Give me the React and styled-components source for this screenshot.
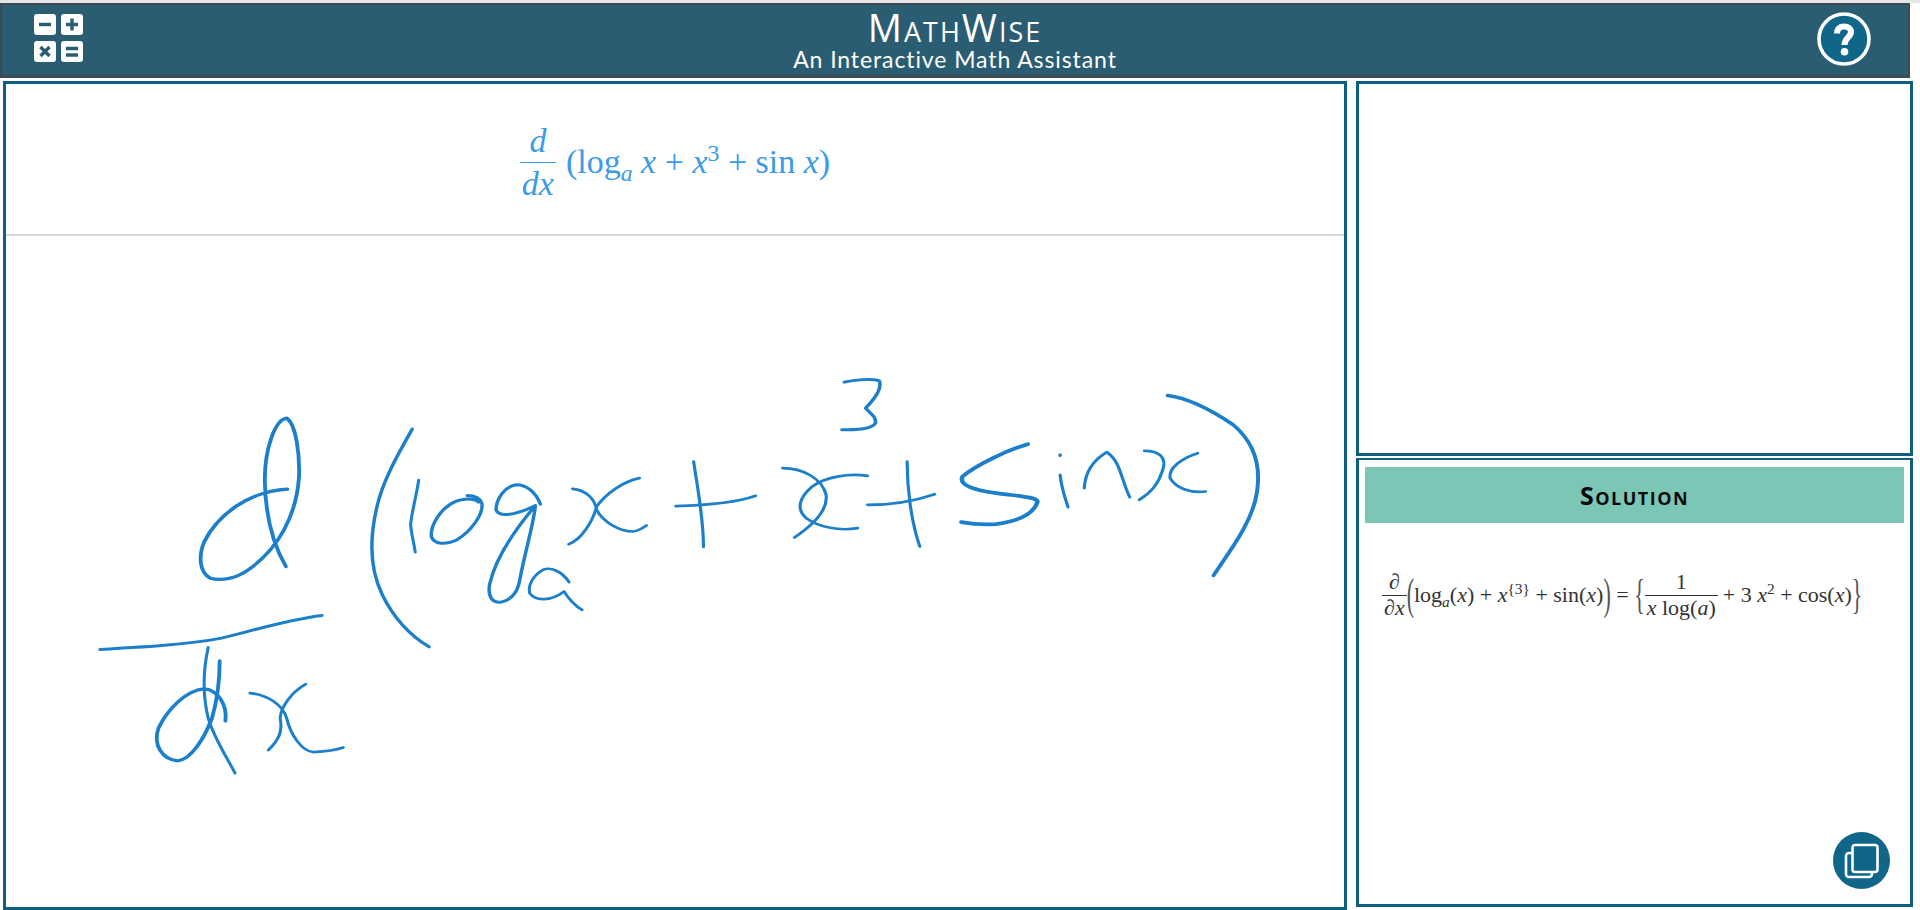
import styled, { createGlobalStyle } from "styled-components";

const Global = createGlobalStyle`
  html, body {
    margin: 0;
    padding: 0;
    background: #fff;
  }
  * {
    box-sizing: border-box;
  }
`;

const Page = styled.div`
  width: 1920px;
  height: 910px;
  overflow: hidden;
  background: #fff;
  border-top: 3px solid #e4e6e7;
  font-family: "Open Sans", sans-serif;
`;

const Header = styled.header`
  width: 1910px;
  height: 75px;
  background: #2b5d72;
  border: 2px solid #3d4a52;
  border-bottom-width: 3px;
  display: grid;
  grid-template-columns: 300px 1fr 300px;
  align-items: center;
  color: #fff;
`;

const LogoWrap = styled.div`
  padding-left: 32px;
  display: flex;
`;

const TitleBox = styled.div`
  align-self: start;
  padding-top: 2px;
  display: flex;
  flex-direction: column;
  align-items: center;
`;

const Title = styled.div`
  font-size: 38px;
  line-height: 40px;
  letter-spacing: 2px;
  font-variant: small-caps;
`;

const Subtitle = styled.div`
  font-family: "Comic Sans MS", "Segoe Print", "Lato", cursive;
  font-size: 23px;
  line-height: 24px;
  letter-spacing: 0.9px;
`;

const HelpWrap = styled.div`
  display: flex;
  justify-content: flex-end;
  padding-right: 36px;
`;

const Main = styled.main`
  display: grid;
  grid-template-columns: 1344px 557px;
  column-gap: 9px;
  height: 829px;
  margin: 3px 0 0 3px;
`;

const Panel = styled.section`
  border: 3px solid #0f6080;
  background: #fff;
  display: flex;
  flex-direction: column;
`;

const MathBar = styled.div`
  height: 152px;
  flex: none;
  border-bottom: 2px solid #d9d9d9;
  display: flex;
  align-items: center;
  justify-content: center;
  padding-top: 6px;
  color: #3b9be9;
  font-family: "Liberation Serif", serif;
  font-size: 34px;
`;

const Formula = styled.div`
  display: flex;
  align-items: center;
  white-space: pre;
  font-family: "Liberation Serif", serif;
`;

const Fraction = styled.span`
  display: inline-flex;
  flex-direction: column;
  align-items: center;
  line-height: ${(p) => p.$lh || 1.12};
  margin-right: ${(p) => p.$gap || 0}px;
`;

const Num = styled.span`
  padding: 0 2px;
  border-bottom: 1.5px solid currentColor;
  align-self: stretch;
  text-align: center;
`;

const Den = styled.span`
  padding: 0 2px;
`;

const V = styled.i``;

const Sub = styled.sub`
  font-size: 0.7em;
  line-height: 0;
`;

const Sup = styled.sup`
  font-size: 0.7em;
  line-height: 0;
`;

const Canvas = styled.svg`
  display: block;
  flex: 1;
  width: 100%;
  min-height: 0;
`;

const Stroke = styled.path`
  fill: none;
  stroke: #1b7fcc;
  stroke-width: ${(p) => p.$w || 8}px;
  stroke-linecap: round;
  stroke-linejoin: round;
`;

const RightColumn = styled.div`
  display: grid;
  grid-template-rows: 375px 449px;
  row-gap: 2px;
`;

const SolutionPanel = styled(Panel)`
  border-top-width: 2px;
  padding: 7px 6px 15px 6px;
`;

const SolutionBar = styled.div`
  height: 56px;
  flex: none;
  background: #7cc6b6;
  display: flex;
  align-items: center;
  justify-content: center;
  color: #0a0a0a;
  font-size: 25px;
  letter-spacing: 1.5px;
  font-weight: 700;
  font-variant: small-caps;
`;

const SolutionMath = styled(Formula)`
  margin: 47px 0 0 17px;
  color: #333;
  font-size: 22px;
`;

const Paren = styled.span`
  display: inline-block;
  font-weight: 400;
  transform: scaleY(${(p) => p.$y || 2});
  font-size: 1em;
  color: #555;
`;

const CopyButton = styled.button`
  margin-top: auto;
  align-self: flex-end;
  margin-right: 14px;
  width: 57px;
  height: 57px;
  padding: 0;
  border: none;
  border-radius: 50%;
  background: #0f6688;
  display: flex;
  align-items: center;
  justify-content: center;
`;

const IconButton = styled.button`
  padding: 0;
  border: none;
  background: none;
  display: block;
`;

const CalcIcon = () => (
  <svg width="50" height="49" viewBox="0 0 50 49">
    <rect x="0" y="0" width="22" height="21" rx="3" fill="#fff" />
    <rect x="27" y="0" width="22" height="21" rx="3" fill="#fff" />
    <rect x="0" y="27" width="22" height="21" rx="3" fill="#fff" />
    <rect x="27" y="27" width="22" height="21" rx="3" fill="#fff" />
    <g stroke="#2b5d72" strokeWidth="3.4" fill="none">
      <path d="M5 10.5h12" />
      <path d="M32 10.5h12M38 4.5v12" />
      <path d="M6.5 33l9 9M15.5 33l-9 9" />
      <path d="M32 34.5h12M32 41h12" />
    </g>
  </svg>
);

const HelpIcon = () => (
  <svg width="56" height="56" viewBox="0 0 56 56">
    <circle cx="28" cy="28" r="25" fill="#0f6688" stroke="#fff" strokeWidth="3.6" />
    <path
      d="M21 22.5 C21 17.5 24 15.5 28 15.5 C32.5 15.5 35 18 35 21 C35 26 28.5 27 28.5 34"
      fill="none"
      stroke="#fff"
      strokeWidth="6"
    />
    <circle cx="28.5" cy="40.8" r="3.8" fill="#fff" />
  </svg>
);

const CopyIcon = () => (
  <svg width="36" height="36" viewBox="0 0 36 36">
    <rect x="2" y="10" width="26" height="24" rx="3" fill="none" stroke="#fff" strokeWidth="2.6" />
    <rect x="8.5" y="2" width="25" height="27" rx="2.5" fill="#0f6688" stroke="#fff" strokeWidth="2.6" />
  </svg>
);

// handwriting, traced from the picture
const leftStrokes = [
  { d: "M538 555 C510 500 485 420 483 300 C482 200 510 115 540 110 C565 130 575 220 572 290 C565 400 520 500 440 565 C410 590 370 600 340 590 C310 570 310 520 325 480 C360 400 440 330 542 323", w: 10 },
  { d: "M868 143 C830 220 790 300 775 380 C755 480 760 570 790 640 C820 710 860 760 912 796", w: 9 },
  { d: "M885 296 C878 350 865 400 864 430 C866 460 872 480 876 512", w: 8 },
  { d: "M1012 342 C1030 342 1045 350 1050 365 C1055 400 1020 450 985 475 C955 490 925 490 918 465 C915 430 945 375 985 358 C1010 350 1030 352 1042 362", w: 9 },
  { d: "M1203 368 C1190 330 1165 310 1140 310 C1110 315 1088 350 1087 385 C1095 410 1140 400 1190 372 C1140 440 1085 530 1070 610 C1065 650 1080 665 1100 662 C1130 655 1145 630 1150 590 C1165 500 1185 430 1190 372", w: 9 },
  { d: "M1278 602 C1260 570 1230 555 1210 565 C1185 580 1170 610 1175 635 C1190 660 1230 660 1265 630 C1275 650 1295 675 1312 685", w: 8 },
  { d: "M1287 322 C1320 325 1345 350 1350 385 C1365 420 1410 450 1445 450 C1460 448 1470 440 1480 432", w: 8 },
  { d: "M1462 290 C1420 300 1375 335 1350 375 C1340 420 1310 475 1277 488", w: 8 },
  { d: "M52 804 C150 798 280 790 370 770 C450 748 540 715 632 702", w: 9 },
  { d: "M380 1018 C385 970 360 925 325 922 C280 925 230 980 205 1040 C190 1090 215 1135 255 1138 C290 1135 325 1070 345 1010 C360 950 365 880 365 838", w: 10 },
  { d: "M335 798 C325 850 318 930 335 1010 C350 1070 385 1130 405 1175", w: 8 },
  { d: "M444 935 C490 940 530 970 540 1010 C550 1060 580 1110 610 1112 C640 1110 670 1105 688 1098", w: 8 },
  { d: "M590 908 C555 930 525 975 523 1010 C530 1050 520 1075 492 1106", w: 8 },
];

const rightStrokes = [
  { d: "M466 62 C490 55 535 50 555 58 C562 85 540 115 520 140 C530 155 548 165 545 185 C535 205 490 205 460 205", w: 9 },
  { d: "M85 300 C95 380 110 470 110 556", w: 8 },
  { d: "M40 434 C100 432 190 425 242 403", w: 8 },
  { d: "M310 320 C360 320 410 350 420 400 C425 440 400 480 340 528", w: 8 },
  { d: "M525 343 C480 335 420 345 385 375 C350 410 345 445 370 470 C400 495 450 510 500 500", w: 8 },
  { d: "M625 300 C625 380 635 480 657 555", w: 8 },
  { d: "M525 430 C580 430 640 420 695 398", w: 8 },
  { d: "M930 248 C880 265 800 310 765 345 C755 370 790 385 850 395 C910 405 950 405 955 420 C945 460 900 480 850 488 C820 490 790 488 762 482", w: 11 },
  { d: "M1012 280 l0 2", w: 9 },
  { d: "M1012 340 C1015 380 1025 410 1032 437", w: 8 },
  { d: "M1073 380 C1075 340 1090 300 1130 272 C1165 300 1165 350 1188 407", w: 8 },
  { d: "M1225 268 C1260 268 1285 285 1270 330 C1260 370 1240 395 1212 415", w: 8 },
  { d: "M1360 275 C1320 290 1285 320 1290 350 C1305 380 1340 395 1380 390", w: 8 },
  { d: "M1284 102 C1340 110 1400 150 1450 190 C1500 240 1520 310 1510 390 C1500 480 1440 570 1400 642", w: 10 },
];

const App = () => {
  return (
    <Page>
      <Global />
      <Header>
        <LogoWrap>
          <IconButton aria-label="calculator">
            <CalcIcon />
          </IconButton>
        </LogoWrap>
        <TitleBox>
          <Title>MathWise</Title>
          <Subtitle>An Interactive Math Assistant</Subtitle>
        </TitleBox>
        <HelpWrap>
          <IconButton aria-label="help">
            <HelpIcon />
          </IconButton>
        </HelpWrap>
      </Header>
      <Main>
        <Panel>
          <MathBar>
            <Formula>
              <Fraction $gap={10} $lh={1.22}>
                <Num><V>d</V></Num>
                <Den><V>dx</V></Den>
              </Fraction>
              <span>
                (log<Sub><V>a</V></Sub> <V>x</V> + <V>x</V><Sup>3</Sup> + sin <V>x</V>)
              </span>
            </Formula>
          </MathBar>
          <Canvas viewBox="6 236 1338 668">
            <g transform="translate(80 380) scale(0.3827 0.3333)">
              {leftStrokes.map((s, i) => (
                <Stroke key={i} d={s.d} $w={s.w} />
              ))}
            </g>
            <g transform="translate(660 360) scale(0.3954 0.3333)">
              {rightStrokes.map((s, i) => (
                <Stroke key={i} d={s.d} $w={s.w} />
              ))}
            </g>
          </Canvas>
        </Panel>
        <RightColumn>
          <Panel />
          <SolutionPanel>
            <SolutionBar>Solution</SolutionBar>
            <SolutionMath>
              <Fraction>
                <Num><V>∂</V></Num>
                <Den>∂<V>x</V></Den>
              </Fraction>
              <Paren>(</Paren>
              <span>
                log<Sub><V>a</V></Sub>(<V>x</V>) + <V>x</V><Sup>{"{3}"}</Sup> + sin(<V>x</V>)
              </span>
              <Paren>)</Paren>
              <span> = </span>
              <Paren $y={1.9}>{"{"}</Paren>
              <Fraction $gap={5}>
                <Num>1</Num>
                <Den><V>x</V> log(<V>a</V>)</Den>
              </Fraction>
              <span>
                + 3 <V>x</V><Sup>2</Sup> + cos(<V>x</V>)
              </span>
              <Paren $y={1.9}>{"}"}</Paren>
            </SolutionMath>
            <CopyButton aria-label="copy">
              <CopyIcon />
            </CopyButton>
          </SolutionPanel>
        </RightColumn>
      </Main>
    </Page>
  );
};

export default App;
